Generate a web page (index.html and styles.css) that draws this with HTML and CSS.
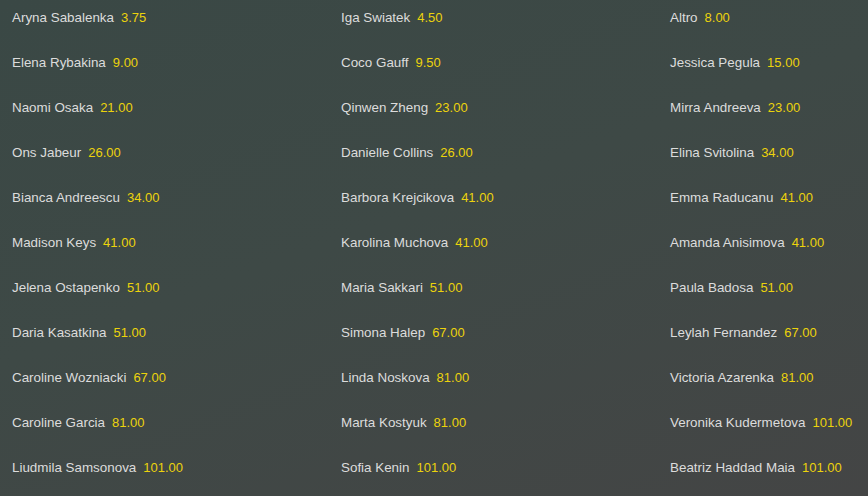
FILE: index.html
```html
<!DOCTYPE html>
<html>
<head>
<meta charset="utf-8">
<link rel="stylesheet" href="styles.css">
</head>
<body>
<div class="grid">
  <div class="cell"><span class="name">Aryna Sabalenka</span><span class="odds">3.75</span></div>
  <div class="cell"><span class="name">Iga Swiatek</span><span class="odds">4.50</span></div>
  <div class="cell"><span class="name">Altro</span><span class="odds">8.00</span></div>
  <div class="cell"><span class="name">Elena Rybakina</span><span class="odds">9.00</span></div>
  <div class="cell"><span class="name">Coco Gauff</span><span class="odds">9.50</span></div>
  <div class="cell"><span class="name">Jessica Pegula</span><span class="odds">15.00</span></div>
  <div class="cell"><span class="name">Naomi Osaka</span><span class="odds">21.00</span></div>
  <div class="cell"><span class="name">Qinwen Zheng</span><span class="odds">23.00</span></div>
  <div class="cell"><span class="name">Mirra Andreeva</span><span class="odds">23.00</span></div>
  <div class="cell"><span class="name">Ons Jabeur</span><span class="odds">26.00</span></div>
  <div class="cell"><span class="name">Danielle Collins</span><span class="odds">26.00</span></div>
  <div class="cell"><span class="name">Elina Svitolina</span><span class="odds">34.00</span></div>
  <div class="cell"><span class="name">Bianca Andreescu</span><span class="odds">34.00</span></div>
  <div class="cell"><span class="name">Barbora Krejcikova</span><span class="odds">41.00</span></div>
  <div class="cell"><span class="name">Emma Raducanu</span><span class="odds">41.00</span></div>
  <div class="cell"><span class="name">Madison Keys</span><span class="odds">41.00</span></div>
  <div class="cell"><span class="name">Karolina Muchova</span><span class="odds">41.00</span></div>
  <div class="cell"><span class="name">Amanda Anisimova</span><span class="odds">41.00</span></div>
  <div class="cell"><span class="name">Jelena Ostapenko</span><span class="odds">51.00</span></div>
  <div class="cell"><span class="name">Maria Sakkari</span><span class="odds">51.00</span></div>
  <div class="cell"><span class="name">Paula Badosa</span><span class="odds">51.00</span></div>
  <div class="cell"><span class="name">Daria Kasatkina</span><span class="odds">51.00</span></div>
  <div class="cell"><span class="name">Simona Halep</span><span class="odds">67.00</span></div>
  <div class="cell"><span class="name">Leylah Fernandez</span><span class="odds">67.00</span></div>
  <div class="cell"><span class="name">Caroline Wozniacki</span><span class="odds">67.00</span></div>
  <div class="cell"><span class="name">Linda Noskova</span><span class="odds">81.00</span></div>
  <div class="cell"><span class="name">Victoria Azarenka</span><span class="odds">81.00</span></div>
  <div class="cell"><span class="name">Caroline Garcia</span><span class="odds">81.00</span></div>
  <div class="cell"><span class="name">Marta Kostyuk</span><span class="odds">81.00</span></div>
  <div class="cell"><span class="name">Veronika Kudermetova</span><span class="odds">101.00</span></div>
  <div class="cell"><span class="name">Liudmila Samsonova</span><span class="odds">101.00</span></div>
  <div class="cell"><span class="name">Sofia Kenin</span><span class="odds">101.00</span></div>
  <div class="cell"><span class="name">Beatriz Haddad Maia</span><span class="odds">101.00</span></div>
</div>
</body>
</html>
```
FILE: styles.css
```css
html, body {
  margin: 0;
  padding: 0;
  height: 100%;
}
body {
  background: linear-gradient(160deg, #3a4845 0%, #3e4946 45%, #444545 100%);
  font-family: "Liberation Sans", Arial, sans-serif;
  font-size: 13.4px;
  overflow: hidden;
}
.grid {
  display: grid;
  grid-template-columns: 329px 329px 1fr;
  padding-left: 12px;
  padding-top: 10px;
}
.cell {
  height: 45px;
  line-height: 16px;
  white-space: nowrap;
}
.name {
  color: #dcdcdc;
  margin-right: 7px;
}
.odds {
  color: #ecd30c;
  font-size: 13px;
}
```
